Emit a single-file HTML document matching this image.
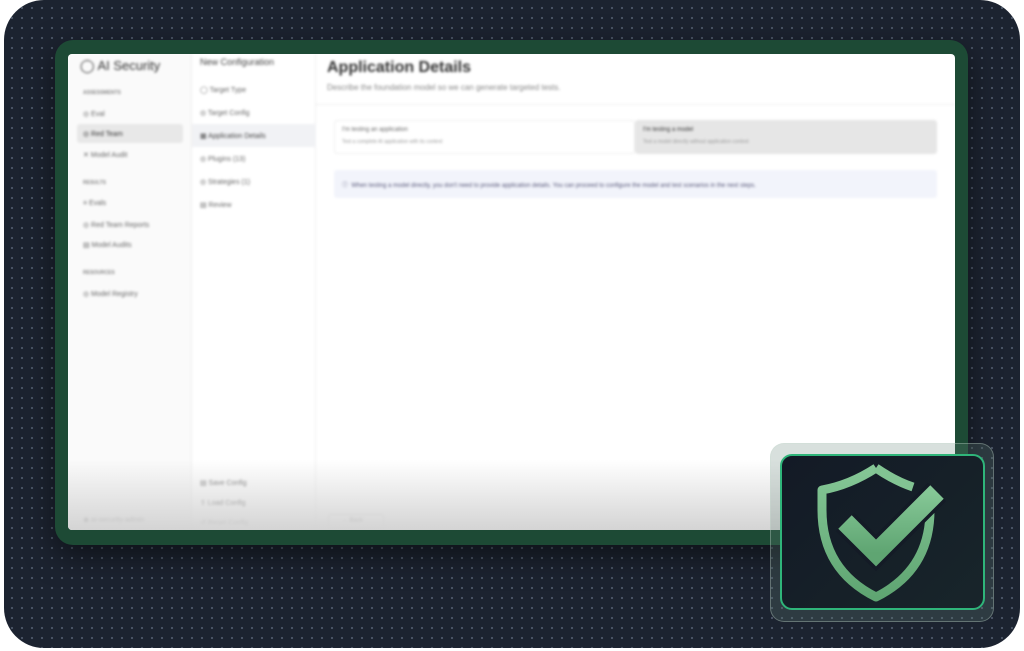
<!DOCTYPE html>
<html><head><style>
*{margin:0;padding:0;box-sizing:border-box}
body{width:1024px;height:651px;background:#fff;position:relative;overflow:hidden;font-family:"Liberation Sans",sans-serif}
.bg{position:absolute;left:4px;top:0;width:1016px;height:648px;border-radius:40px;background-color:#1c2330;background-image:radial-gradient(circle,#4a5566 1px,transparent 1.3px);background-size:10px 10px;background-position:3px 3px}
.frame{position:absolute;left:55px;top:40px;width:913px;height:505px;border-radius:18px;background:#1d4a35;box-shadow:0 10px 30px rgba(0,0,0,.5)}
.screen{position:absolute;left:68px;top:54px;width:887px;height:476px;background:#fff;overflow:hidden;border-radius:4px}
.blur{filter:blur(1.2px);position:absolute;inset:0;font-size:7px;color:#666}
.side{position:absolute;left:0;top:0;width:124px;height:100%;background:#fafafa;border-right:1px solid #eee}
.mid{position:absolute;left:124px;top:0;width:124px;height:100%;border-right:1px solid #eee}
.t{position:absolute;white-space:nowrap}
.fade{position:absolute;left:0;right:0;bottom:0;height:70px;background:linear-gradient(rgba(255,255,255,0),#d4d4d4)}
.glass{position:absolute;left:770px;top:443px;width:224px;height:179px;border-radius:14px;background:rgba(100,130,120,.25);border:1px solid rgba(200,220,210,.35)}
.badge{position:absolute;left:780px;top:454px;width:205px;height:156px;border-radius:12px;background:linear-gradient(135deg,#131a26,#18252a);border:2px solid #2fb57a}
</style></head><body>
<div class="bg"></div>
<div class="frame"></div>
<div class="screen"><div class="blur">
<div class="side">
<div class="t" style="left:12px;top:4px;font-size:13px;color:#333">◯ AI Security</div>
<div class="t" style="left:15px;top:36px;font-size:5px;font-weight:bold;color:#888">ASSESSMENTS</div>
<div class="t" style="left:15px;top:56px">◎ Eval</div>
<div style="position:absolute;left:9px;top:70px;width:106px;height:19px;background:#e8e8e8;border-radius:3px"></div>
<div class="t" style="left:15px;top:76px;color:#333">◎ Red Team</div>
<div class="t" style="left:15px;top:97px">✕ Model Audit</div>
<div class="t" style="left:15px;top:126px;font-size:5px;font-weight:bold;color:#888">RESULTS</div>
<div class="t" style="left:15px;top:146px">≡ Evals</div>
<div class="t" style="left:15px;top:167px">◎ Red Team Reports</div>
<div class="t" style="left:15px;top:187px">▤ Model Audits</div>
<div class="t" style="left:15px;top:216px;font-size:5px;font-weight:bold;color:#888">RESOURCES</div>
<div class="t" style="left:15px;top:236px">◎ Model Registry</div>
<div class="t" style="left:15px;top:462px">◉ ai-security-admin</div>
</div>
<div class="mid">
<div class="t" style="left:8px;top:3px;font-size:9px;color:#444">New Configuration</div>
<div class="t" style="left:8px;top:32px">◯ Target Type</div>
<div class="t" style="left:8px;top:55px">◎ Target Config</div>
<div style="position:absolute;left:0;top:70px;width:124px;height:23px;background:#f1f2f5"></div>
<div class="t" style="left:8px;top:78px;color:#444">▦ Application Details</div>
<div class="t" style="left:8px;top:101px">◎ Plugins (13)</div>
<div class="t" style="left:8px;top:124px">◎ Strategies (1)</div>
<div class="t" style="left:8px;top:147px">▤ Review</div>
<div class="t" style="left:8px;top:425px">▤ Save Config</div>
<div class="t" style="left:8px;top:445px">⇪ Load Config</div>
<div class="t" style="left:8px;top:465px">↺ Reset Config</div>
</div>
<div class="t" style="left:259px;top:5px;font-size:16px;font-weight:bold;color:#333">Application Details</div>
<div class="t" style="left:259px;top:29px;font-size:8px;color:#888">Describe the foundation model so we can generate targeted tests.</div>
<div style="position:absolute;left:248px;top:50px;right:0;height:1px;background:#eee"></div>
<div style="position:absolute;left:266px;top:66px;width:301px;height:34px;border:1px solid #eee;border-radius:3px"></div>
<div class="t" style="left:274px;top:73px;font-size:6px">I'm testing an application</div>
<div class="t" style="left:274px;top:85px;font-size:5px;color:#999">Test a complete AI application with its context</div>
<div style="position:absolute;left:567px;top:66px;width:302px;height:34px;background:#e6e6e6;border-radius:3px"></div>
<div class="t" style="left:575px;top:73px;font-size:6px;color:#333">I'm testing a model</div>
<div class="t" style="left:575px;top:85px;font-size:5px;color:#999">Test a model directly without application context</div>
<div style="position:absolute;left:266px;top:116px;width:603px;height:28px;background:#f2f4fb;border-radius:3px"></div>
<div class="t" style="left:274px;top:126px;font-size:6px;color:#557">ⓘ &nbsp;When testing a model directly, you don't need to provide application details. You can proceed to configure the model and test scenarios in the next steps.</div>
<div style="position:absolute;left:260px;top:460px;width:56px;height:16px;border:1px solid #ddd;border-radius:3px"></div>
<div class="t" style="left:274px;top:464px;font-size:6px">← Back</div>
</div><div class="fade"></div></div>
<div class="glass"></div>
<div class="badge"></div>
<svg style="position:absolute;left:0;top:0" width="1024" height="651">
<defs><linearGradient id="g" x1="0" y1="0" x2="0" y2="1"><stop offset="0" stop-color="#85c796"/><stop offset="1" stop-color="#5fa572"/></linearGradient></defs>
<path d="M876 468 Q850 485 822 490 L822 510 Q822 570 876 597 Q930 570 930 510 L930 498" fill="none" stroke="url(#g)" stroke-width="9" stroke-linejoin="round"/>
<path d="M876 468 Q895 481 913 487" fill="none" stroke="#82c493" stroke-width="9"/>
<path d="M845 522 L876 553 L937 492" fill="none" stroke="#141b26" stroke-width="26"/>
<path d="M845 522 L876 553 L937 492" fill="none" stroke="url(#g)" stroke-width="19"/>
</svg>
</body></html>
